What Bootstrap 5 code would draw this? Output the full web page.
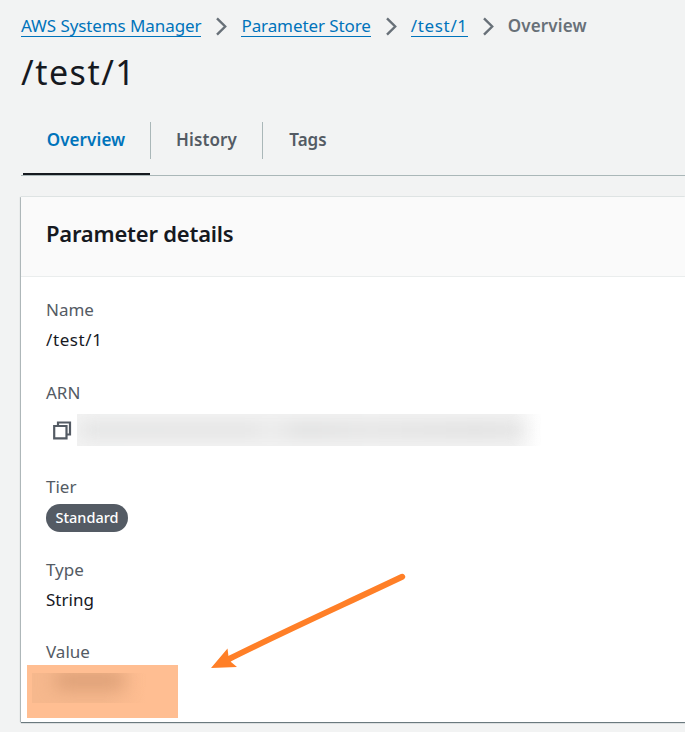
<!DOCTYPE html>
<html lang="en">
<head>
<meta charset="utf-8">
<meta name="viewport" content="width=device-width, initial-scale=1">
<title>/test/1 - Parameter Store</title>
<link href="https://cdn.jsdelivr.net/npm/bootstrap@5.3.0/dist/css/bootstrap.min.css" rel="stylesheet">
<style>
body{font:400 17px/30px "Noto Sans","Open Sans",sans-serif;background:#f2f3f3;color:#16191f;height:732px;overflow:hidden}
.page{padding:11px 0 0 21px}
.crumbs{height:30px;white-space:nowrap}
.crumbs a{color:#0073bb;text-decoration:none;border-bottom:1px solid #0073bb;line-height:21px;height:22px;margin-top:4px;margin-bottom:auto;letter-spacing:-.09px}
.crumbs .crumb-path{letter-spacing:.65px}
.crumbs svg{margin:0 14px 0 15px;flex:none}
.crumb-end{color:#687078;font-weight:600;letter-spacing:.15px}
.page-title{font-size:34px;line-height:46px;font-weight:400;margin:8px 0 0;letter-spacing:1.5px}
.tabs{height:54px;margin-top:27px;border-bottom:1px solid #aab7b8}
.tabs .nav-link{padding:0;height:37px;line-height:36px;color:#545b64;font-weight:600;border-right:1px solid #aab7b8;text-align:center}
.tabs .nav-link.active{color:#0073bb;width:130px;padding-left:1px;letter-spacing:.1px}
.tabs .tab-history{width:112px;letter-spacing:.1px}
.tabs .tab-tags{width:90px;border:0}
.tab-mark{width:127px;height:2px;background:#16191f;margin:14px 0 0 2px}
.panel{margin-top:21px;height:525px;border:0;border-radius:0;background:#fff;box-shadow:0 1px 1px 0 rgba(0,28,36,.55),-1px 0 1px 0 rgba(0,28,36,.2),0 -1px 0 #e6eaea}
.panel-head{height:80px;background:#fafafa;border-bottom:1px solid #eaeded;padding:17px 25px;font-size:22px;line-height:38px;font-weight:600;letter-spacing:-.22px}
.panel-body{padding:18px 25px 0}
.term{color:#545b64}
.arn-row{height:32px;margin-top:6px;padding-left:7px}
.arn-mask{width:465px;height:32px;margin-left:5px;overflow:hidden;background:linear-gradient(90deg,#f2f2f2 0 435px,#fff 465px)}
.arn-mask i{display:block;height:14px;width:442px;margin:9px 0 0 4px;background:linear-gradient(90deg,#e2e3e3,#e3e3e3 38%,#ebebeb 43%,#dddede 50%,#e3e3e3 65%,#dedede 90%,#e2e2e2);filter:blur(8px)}
.mt-arn{margin-top:23px}
.mt-tier{margin-top:26px}
.mt-type{margin-top:23px}
.mt-value{margin-top:22px}
.name-value{letter-spacing:.6px}
.tier{background:#545b64;color:#fff;border-radius:14px;width:82px;height:28px;line-height:27px;font-size:14.5px;font-weight:500;padding:0;margin-top:2px}
.value-mark{left:27px;top:665px;width:151px;height:53px;background:#ffbe92}
.value-mask{margin:8px 0 0 5px;width:138px;height:30px;overflow:hidden;background:linear-gradient(90deg,#f6b88d,#f6b88d 70px,#ffbe92 115px)}
.value-mask i{display:block;width:68px;height:15px;margin:0 0 0 24px;background:#d79a72;filter:blur(9px)}
.pointer{left:0;top:0;pointer-events:none}
</style>
</head>
<body>
<main class="page">
<nav class="crumbs d-flex align-items-center" aria-label="breadcrumb">
<a href="#">AWS Systems Manager</a>
<svg width="11" height="19" viewBox="0 0 11 19" fill="none" stroke="#687078" stroke-width="2.4"><path d="M1 1.3 9.200 9.500 1 17.700"/></svg>
<a href="#">Parameter Store</a>
<svg width="11" height="19" viewBox="0 0 11 19" fill="none" stroke="#687078" stroke-width="2.4"><path d="M1 1.3 9.200 9.500 1 17.700"/></svg>
<a href="#" class="crumb-path">/test/1</a>
<svg width="11" height="19" viewBox="0 0 11 19" fill="none" stroke="#687078" stroke-width="2.4"><path d="M1 1.3 9.200 9.500 1 17.700"/></svg>
<span class="crumb-end">Overview</span>
</nav>
<h1 class="page-title">/test/1</h1>
<div class="tabs">
<nav class="nav">
<a class="nav-link active" href="#">Overview</a>
<a class="nav-link tab-history" href="#">History</a>
<a class="nav-link tab-tags" href="#">Tags</a>
</nav>
<div class="tab-mark"></div>
</div>
<section class="card panel">
<h2 class="panel-head m-0">Parameter details</h2>
<div class="panel-body d-flex flex-column">
<div class="term">Name</div>
<div class="name-value">/test/1</div>
<div class="term mt-arn">ARN</div>
<div class="arn-row d-flex align-items-center">
<svg width="19" height="19" viewBox="0 0 19 19" fill="none" stroke="#545b64" stroke-width="2.2"><path d="M5 5V1.500h12V13.500H13.500M1.200 5h12.300v12.300H1.200z"/></svg>
<div class="arn-mask"><i></i></div>
</div>
<div class="term mt-tier">Tier</div>
<span class="badge tier">Standard</span>
<div class="term mt-type">Type</div>
<div>String</div>
<div class="term mt-value">Value</div>
</div>
</section>
</main>
<div class="value-mark position-absolute overflow-hidden"><div class="value-mask"><i></i></div></div>
<svg class="pointer position-absolute" width="685" height="732" viewBox="0 0 685 732"><path d="M402.200 576.800 C345 604 285 631 229 659" fill="none" stroke="#ff7f27" stroke-width="6" stroke-linecap="round"/><path d="M211 668 227.500 648.500 228.500 656.500 231 662 237 667z" fill="#ff7f27"/></svg>
<script src="https://cdn.jsdelivr.net/npm/bootstrap@5.3.0/dist/js/bootstrap.bundle.min.js"></script>
</body>
</html>
